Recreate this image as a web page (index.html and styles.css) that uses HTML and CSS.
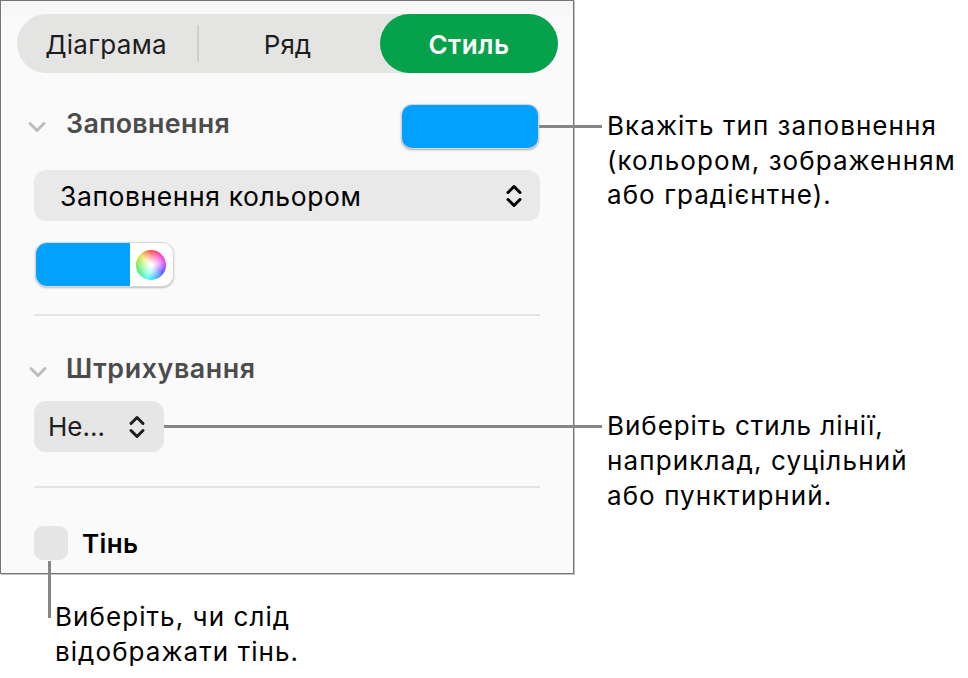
FILE: index.html
```html
<!DOCTYPE html>
<html lang="uk">
  <head>
    <meta charset="UTF-8" />
    <meta name="viewport" content="width=device-width, initial-scale=1.0" />
    <title>Стиль</title>
    <link rel="stylesheet" href="styles.css">
  </head>
  <body>
    <main>
      <div class="top">
        <section class="panel">
          <nav class="tabs">
            <button class="tab diagram">Діаграма</button>
            <button class="tab series">Ряд</button>
            <button class="tab active">Стиль</button>
          </nav>

          <div class="heading fill-heading">
            <svg class="chevron" width="20" height="14" viewBox="0 0 20 14">
              <path d="M3 3.5 L10 10.5 L17 3.5" />
            </svg>
            <h2>Заповнення</h2>
            <span class="swatch"></span>
          </div>

          <button class="popup wide">
            <span>Заповнення кольором</span>
            <svg class="arrows" width="20" height="26" viewBox="0 0 20 26">
              <path d="M4 9.5 L10 3.5 L16 9.5 M4 16.5 L10 22.5 L16 16.5" />
            </svg>
          </button>

          <div class="colorwell">
            <span class="color"></span>
            <span class="wheel"></span>
          </div>

          <hr />

          <div class="heading stroke-heading">
            <svg class="chevron" width="20" height="14" viewBox="0 0 20 14">
              <path d="M3 3.5 L10 10.5 L17 3.5" />
            </svg>
            <h2>Штрихування</h2>
          </div>

          <button class="popup small">
            <span>Не...</span>
            <svg class="arrows" width="20" height="26" viewBox="0 0 20 26">
              <path d="M4 9.5 L10 3.5 L16 9.5 M4 16.5 L10 22.5 L16 16.5" />
            </svg>
          </button>

          <hr class="second" />

          <div class="shadow">
            <span class="checkbox"></span>
            <span class="label">Тінь</span>
          </div>
        </section>

        <aside>
          <p class="note-fill">Вкажіть тип заповнення<br />(кольором, зображенням<br />або градієнтне).</p>
          <p class="note-stroke"><span class="tight">Виберіть стиль лінії,</span><br /><span class="loose">наприклад, суцільний</span><br />або пунктирний.</p>
        </aside>
      </div>

      <p class="note-shadow">Виберіть, чи слід<br />відображати тінь.</p>

      <!-- leader lines -->
      <i class="line line-fill"></i>
      <i class="line line-stroke"></i>
      <i class="line line-shadow"></i>
    </main>
  </body>
</html>
```
FILE: styles.css
```css
* {
  box-sizing: border-box;
}

body {
  margin: 0;
  background: white;
  color: black;
  font-family: Inter, "Liberation Sans", sans-serif;
  font-size: 26px;
}

main {
  position: relative;
  width: 968px;
  height: 678px;
  overflow: hidden;
}

.top {
  display: flex;
  height: 575px;
}

.panel {
  width: 574px;
  height: 574px;
  padding: 13px 16px;
  border: 1px solid #777577;
  box-shadow: 1px 1px 0 #c4c4c4;
  background: linear-gradient(#f6f6f6, #fafafa 20px);
}

button {
  border: none;
  padding: 0;
  font-family: inherit;
  font-size: 26px;
  color: black;
}

.tabs {
  display: flex;
  align-items: center;
  width: 541px;
  height: 59px;
  border-radius: 30px;
  background: #e4e4e3;
}

.tab {
  height: 37px;
  padding-top: 2px;
  background: none;
  color: #1d1d1d;
}

.diagram {
  width: 182px;
  padding-right: 2px;
  border-right: 2px solid #cfcfcf;
  letter-spacing: 0.3px;
}

.series {
  width: 181px;
  padding-right: 4px;
}

.active {
  width: 178px;
  height: 59px;
  border-radius: 30px;
  background: #06a14b;
  color: white;
  font-weight: 600;
  letter-spacing: 0.5px;
}

.heading {
  display: flex;
  align-items: center;
  width: 521px;
  padding-left: 10px;
}

.fill-heading {
  height: 46px;
  margin-top: 30px;
}

.stroke-heading {
  height: 34px;
  margin-top: 36px;
  padding-left: 11px;
}

h2 {
  margin: 0 0 0 19px;
  padding-bottom: 6px;
  flex-grow: 1;
  font-size: 26.8px;
  line-height: 32px;
  font-weight: 600;
  letter-spacing: 0.35px;
  color: #4c4c4c;
}

.stroke-heading h2 {
  margin-left: 18px;
  padding-bottom: 2px;
  letter-spacing: 0.6px;
}

.chevron {
  fill: none;
  stroke: #bdbdbd;
  stroke-width: 3;
  stroke-linecap: round;
  stroke-linejoin: round;
}

.fill-heading .chevron {
  margin-top: 2px;
}

.stroke-heading .chevron {
  margin-top: 5px;
}

.swatch {
  width: 136px;
  height: 43px;
  border-radius: 10px;
  background: #02a0ff;
  box-shadow: 0 0 0 1px #d5d5d5, 0 1px 2px 1px #aaa;
}

.popup {
  display: flex;
  align-items: center;
  justify-content: space-between;
  height: 51px;
  margin-left: 17px;
  border-radius: 12px;
  background: #e9e9e9;
}

.wide {
  width: 506px;
  margin-top: 21px;
  padding: 0 16px 0 26px;
  font-size: 26.5px;
  letter-spacing: 0.58px;
}

.small {
  width: 130px;
  margin-top: 15px;
  padding: 0 17px 0 14px;
  background: #e6e6e6;
  color: #1d1d1d;
}

.arrows {
  fill: none;
  stroke: currentColor;
  stroke-width: 3;
  stroke-linecap: round;
  stroke-linejoin: round;
}

.colorwell {
  display: flex;
  align-items: center;
  width: 137px;
  height: 43px;
  margin: 22px 0 0 19px;
  border-radius: 11px;
  background: white;
  overflow: hidden;
  box-shadow: 0 0 0 1px #d9d9d9, 0 1px 2px 1px #bbb;
}

.color {
  width: 94px;
  height: 43px;
  background: #02a0ff;
}

.wheel {
  width: 30px;
  height: 30px;
  margin-left: 6px;
  border-radius: 50%;
  background: radial-gradient(closest-side, white 10%, rgba(255, 255, 255, 0.55) 55%, rgba(255, 255, 255, 0)),
    conic-gradient(#f44, #f3a 40deg, #d4f 80deg, #54f 120deg, #3bf 160deg, #4fe 195deg, #4e7 240deg, #7e4 275deg, #ed4 315deg, #f44);
}

hr {
  width: 506px;
  height: 2px;
  margin: 28px 0 0 17px;
  border: none;
  background: #e4e4e4;
}

.second {
  margin-top: 34px;
}

.shadow {
  display: flex;
  align-items: center;
  height: 35px;
  margin: 37px 0 0 17px;
}

.checkbox {
  width: 34px;
  height: 34px;
  border-radius: 9px;
  background: #e5e5e5;
}

.label {
  margin-left: 14px;
  padding-top: 1px;
  font-weight: 600;
  letter-spacing: 0.4px;
}

p {
  margin: 0;
  line-height: 34.7px;
  letter-spacing: 1.06px;
  white-space: nowrap;
}

.tight {
  letter-spacing: 0.95px;
}

.loose {
  letter-spacing: 1.15px;
}

aside {
  padding: 109px 0 0 33px;
}

.note-stroke {
  margin-top: 196px;
}

.note-shadow {
  padding: 25px 0 0 55px;
}

.line {
  position: absolute;
  background: #868686;
}

.line-fill {
  left: 539px;
  top: 125px;
  width: 63px;
  height: 3px;
}

.line-stroke {
  left: 164px;
  top: 425px;
  width: 438px;
  height: 3px;
}

.line-shadow {
  left: 48px;
  top: 561px;
  width: 3px;
  height: 57px;
}
```
